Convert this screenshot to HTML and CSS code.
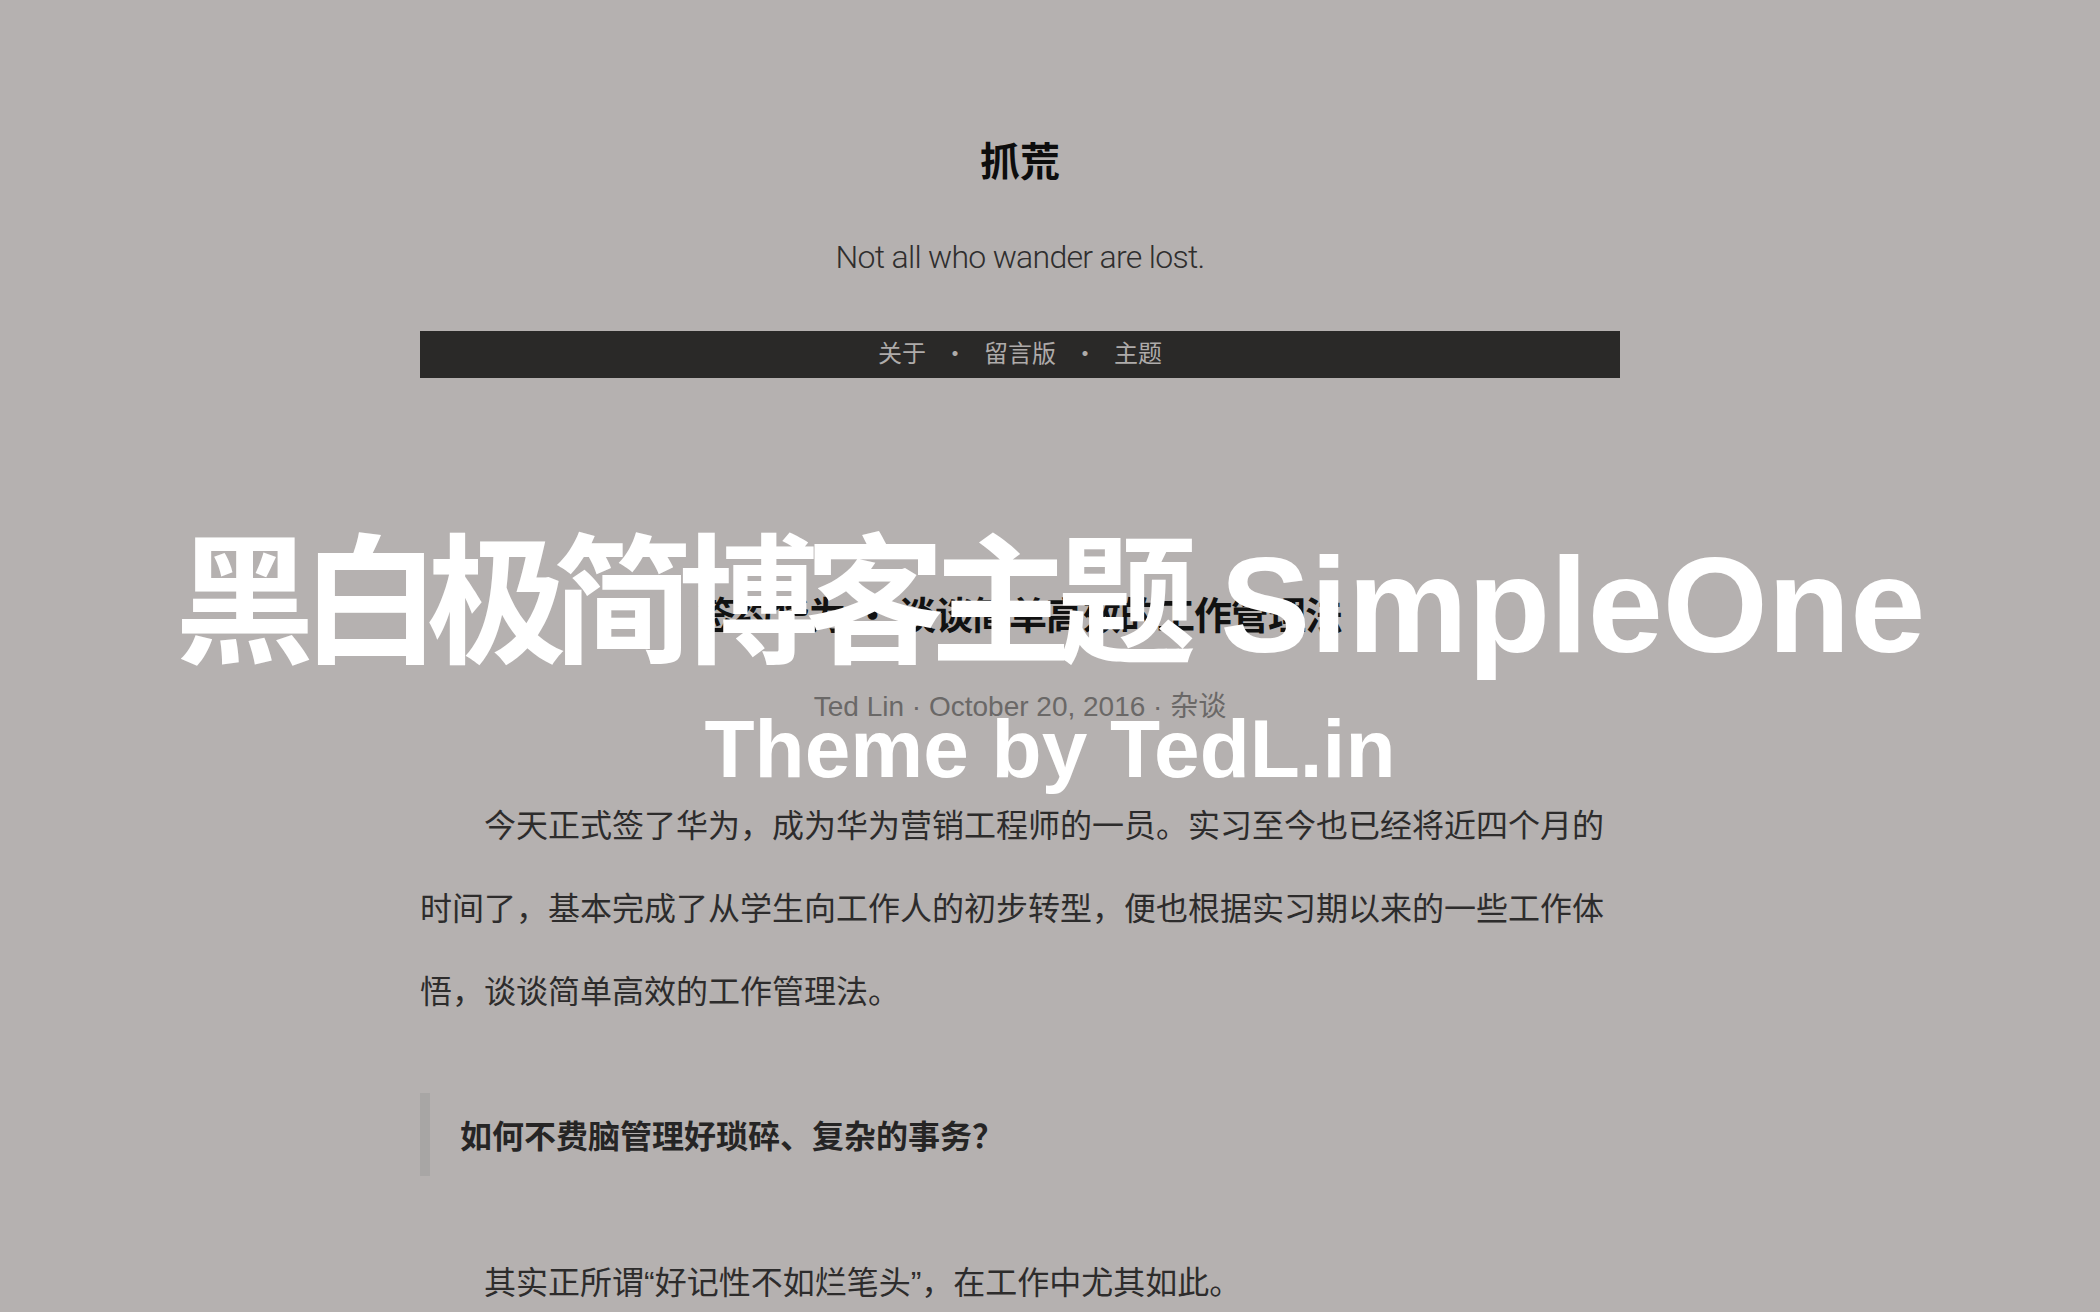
FILE: index.html
```html
<!DOCTYPE html>
<html lang="zh-CN">
<head>
<meta charset="utf-8">
<title>抓荒</title>
<link rel="stylesheet" href="styles.css">
</head>
<body>
<div class="page">
  <header class="site-header">
    <h1 class="site-title">抓荒</h1>
    <p class="site-desc">Not all who wander are lost.</p>
    <nav class="nav">
      <a class="nav-item">关于</a><span class="nav-sep">·</span><a class="nav-item">留言版</a><span class="nav-sep">·</span><a class="nav-item">主题</a>
    </nav>
  </header>
  <article class="post">
    <h2 class="post-title">签约华为 · 谈谈简单高效的工作管理法</h2>
    <div class="post-meta">Ted Lin · October 20, 2016 · 杂谈</div>
    <div class="post-body">
      <p class="indent">今天正式签了华为，成为华为营销工程师的一员。实习至今也已经将近四个月的时间了，基本完成了从学生向工作人的初步转型，便也根据实习期以来的一些工作体悟，谈谈简单高效的工作管理法。</p>
      <blockquote class="quote">如何不费脑管理好琐碎、复杂的事务？</blockquote>
      <p class="indent">其实正所谓<span class="latin-q">“</span>好记性不如烂笔头<span class="latin-q">”</span>，在工作中尤其如此。</p>
    </div>
  </article>
</div>
<div class="overlay">
  <div class="overlay-title"><span class="cjk">黑白极简博客主题</span> SimpleOne</div>
  <div class="overlay-sub">Theme by TedL.in</div>
</div>
</body>
</html>
```
FILE: styles.css
```css
html, body {
  margin: 0;
  padding: 0;
}
body {
  width: 2100px;
  height: 1312px;
  overflow: hidden;
  background: #b5b1b0;
  font-family: "Liberation Sans", "Noto Sans CJK SC", sans-serif;
  position: relative;
  box-sizing: border-box;
  padding-right: 60px;
}
.page {
  width: 1200px;
  margin: 0 auto;
}
.site-header {
  padding-top: 135px;
  text-align: center;
}
.site-title {
  margin: 0;
  font-size: 40px;
  line-height: 48px;
  font-weight: 700;
  color: #0d0d0d;
  font-family: "Noto Sans CJK SC", sans-serif;
}
.site-desc {
  margin: 50px 0 0;
  font-family: Roboto, "Liberation Sans", sans-serif;
  font-weight: 300;
  font-size: 32px;
  line-height: 48px;
  letter-spacing: -0.7px;
  color: #2f2e2e;
}
.nav {
  margin-top: 50px;
  height: 47px;
  background: #2a2928;
  display: flex;
  justify-content: center;
  align-items: center;
  font-family: "Noto Sans CJK SC", sans-serif;
  font-size: 24px;
  line-height: 47px;
  color: #aeabaa;
}
.nav-item,
.nav-sep {
  position: relative;
  top: -3px;
}
.nav-item {
  color: inherit;
  text-decoration: none;
}
.nav-sep {
  margin: 0 17px;
}
.post {
  margin-top: 212px;
}
.post-title {
  margin: 0;
  text-align: center;
  font-family: "Noto Sans CJK SC", sans-serif;
  font-size: 38px;
  line-height: 46px;
  font-weight: 700;
  letter-spacing: -1px;
  color: #111;
}
.post-meta {
  margin-top: 51px;
  text-align: center;
  font-size: 28px;
  line-height: 40px;
  color: #6a6867;
}
.post-body {
  margin-top: 55px;
  font-size: 32px;
  line-height: 83px;
  color: #2d2c2c;
  font-family: "Noto Sans CJK SC", sans-serif;
}
.post-body p {
  margin: 0;
}
.indent {
  text-indent: 2em;
}
.latin-q {
  font-family: "Liberation Sans", sans-serif;
}
.quote {
  margin: 62px 0 63px;
  border-left: 10px solid #a8a6a5;
  padding-left: 30px;
  font-weight: 700;
  color: #262525;
}
.overlay {
  position: absolute;
  left: 0;
  top: 0;
  width: 2100px;
  height: 1312px;
  display: flex;
  flex-direction: column;
  align-items: center;
  padding-top: 511px;
  box-sizing: border-box;
  color: #fff;
  font-family: "Liberation Sans", "Noto Sans CJK SC", sans-serif;
  font-weight: 700;
}
.overlay-title {
  font-size: 135px;
  line-height: 160px;
  white-space: nowrap;
}
.overlay-title .cjk {
  font-family: "Noto Sans CJK SC", sans-serif;
  font-size: 140px;
  letter-spacing: -14px;
}
.overlay-sub {
  margin-top: 13px;
  font-size: 82px;
  line-height: 100px;
}
```
